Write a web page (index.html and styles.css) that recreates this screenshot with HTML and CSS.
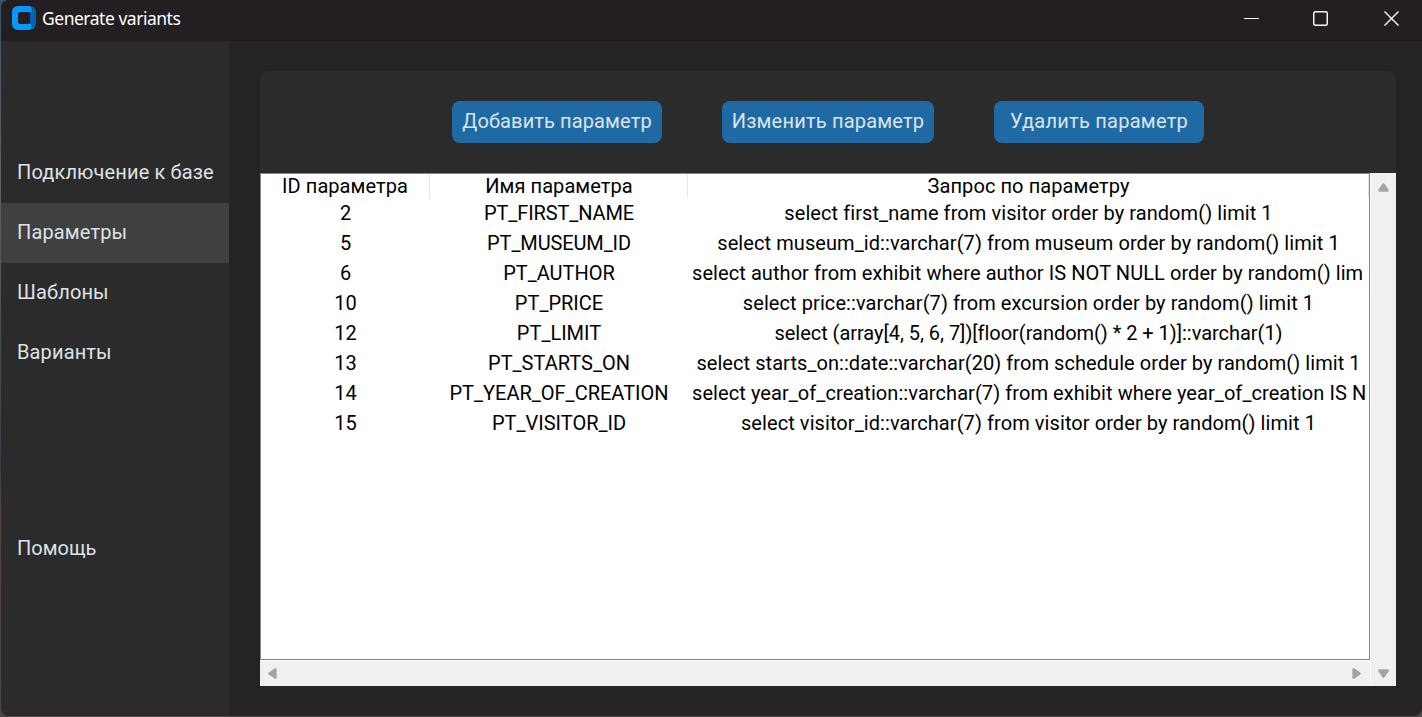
FILE: index.html
```html
<!DOCTYPE html>
<html lang="ru">
<head>
<meta charset="utf-8">
<title>Generate variants</title>
<link rel="stylesheet" href="styles.css">
</head>
<body>
<div class="window">
  <header class="titlebar">
    <svg class="logo" width="24" height="24" viewBox="0 0 24 24"><rect width="24" height="24" rx="6" fill="#0561ad"/><path d="M6 0H16.500a3 3 0 0 1 3 3V6H9a3 3 0 0 0-3 3v6a3 3 0 0 0 3 3H19.500v3a3 3 0 0 1-3 3H6a6 6 0 0 1-6-6V6a6 6 0 0 1 6-6Z" fill="#0a97fb"/><rect x="6" y="6" width="12" height="12" rx="2.500" fill="#231e21"/></svg>
    <h1 class="title">Generate variants</h1>
    <div class="controls">
      <svg width="16" height="16" viewBox="0 0 16 16"><path d="M0 7.5H15" stroke="#fff"/></svg>
      <svg class="max" width="16" height="16" viewBox="0 0 16 16"><rect x=".75" y=".75" width="13.5" height="13.5" rx="1.5" fill="none" stroke="#fff" stroke-width="1.4"/></svg>
      <svg width="16" height="16" viewBox="0 0 16 16"><path d="M.5.5 14.5 14.5M14.5.5.5 14.5" stroke="#fff" stroke-width="1.4"/></svg>
    </div>
  </header>
  <div class="body">
    <nav class="sidebar">
      <a class="item">Подключение к базе</a>
      <a class="item active">Параметры</a>
      <a class="item">Шаблоны</a>
      <a class="item">Варианты</a>
      <a class="item help">Помощь</a>
    </nav>
    <main class="panel">
      <div class="toolbar">
        <button class="btn">Добавить параметр</button>
        <button class="btn wide">Изменить параметр</button>
        <button class="btn loose">Удалить параметр</button>
      </div>
      <div class="viewer">
        <div class="table">
          <div class="row head"><div>ID параметра</div><div>Имя параметра</div><div>Запрос по параметру</div></div>
          <div class="row"><div>2</div><div class="tight">PT_FIRST_NAME</div><div class="first">select first_name from visitor order by random() limit 1</div></div>
          <div class="row"><div>5</div><div class="tight">PT_MUSEUM_ID</div><div>select museum_id::varchar(7) from museum order by random() limit 1</div></div>
          <div class="row"><div>6</div><div>PT_AUTHOR</div><div class="clip">select author from exhibit where author IS NOT NULL order by random() lim</div></div>
          <div class="row"><div>10</div><div>PT_PRICE</div><div>select price::varchar(7) from excursion order by random() limit 1</div></div>
          <div class="row"><div>12</div><div>PT_LIMIT</div><div class="array">select (array[4, 5, 6, 7])[floor(random() * 2 + 1)]::varchar(1)</div></div>
          <div class="row"><div>13</div><div>PT_STARTS_ON</div><div class="date">select starts_on::date::varchar(20) from schedule order by random() limit 1</div></div>
          <div class="row"><div>14</div><div>PT_YEAR_OF_CREATION</div><div class="clip">select year_of_creation::varchar(7) from exhibit where year_of_creation IS N</div></div>
          <div class="row"><div>15</div><div>PT_VISITOR_ID</div><div>select visitor_id::varchar(7) from visitor order by random() limit 1</div></div>
        </div>
        <div class="vbar">
          <svg width="11" height="9" viewBox="0 0 11 9"><path d="M4.5.7Q5.5-.3 6.5.7L10.7 6.8Q11.2 8.7 9.5 8.7H1.5Q-.2 8.7.3 6.8Z" fill="#a3a3a3"/></svg>
          <svg width="11" height="9" viewBox="0 0 11 9"><path d="M4.5 8.3Q5.5 9.3 6.5 8.3L10.7 2.2Q11.2.3 9.5.3H1.5Q-.2.3.3 2.2Z" fill="#a3a3a3"/></svg>
        </div>
        <div class="hbar">
          <svg width="9" height="11" viewBox="0 0 9 11"><path d="M.7 4.5Q-.3 5.5.7 6.5L6.8 10.7Q8.7 11.2 8.7 9.5V1.5Q8.7-.2 6.8.3Z" fill="#a3a3a3"/></svg>
          <svg width="9" height="11" viewBox="0 0 9 11"><path d="M8.3 4.5Q9.3 5.5 8.3 6.5L2.2 10.7Q.3 11.2.3 9.5V1.5Q.3-.2 2.2.3Z" fill="#a3a3a3"/></svg>
        </div>
      </div>
    </main>
  </div>
</div>
</body>
</html>
```
FILE: styles.css
```css
* { box-sizing: border-box; }
body { margin: 0; height: 717px; overflow: hidden; padding: 0 0 1px 1px; background: linear-gradient(#355566, #62605f 25%, #344147 65%, #51453f 70%, #4b4646); font-family: Roboto, "Liberation Sans", sans-serif; font-size: 20px; }
.window { height: 716px; display: flex; flex-direction: column; background: #242424; border-radius: 8px 0 8px 8px; overflow: hidden; }
.titlebar { height: 41px; flex: none; display: flex; align-items: center; padding: 0 22px 4px 11px; background: #231e21; color: #fff; }
.logo { margin-top: -1px; }
.title { margin: -1px 0 0 6px; font: 17.5px/24px "Noto Sans", sans-serif; letter-spacing: -.48px; }
.controls { display: flex; margin-left: auto; gap: 54px; }
.max { margin: 0 1px 0 -1px; }
.body { flex: 1; display: flex; min-height: 0; }
.sidebar { width: 228px; background: #2b2b2b; padding-top: 102px; }
.item { display: flex; align-items: center; height: 60px; padding: 0 0 2px 16px; color: #dfe2e6; white-space: nowrap; letter-spacing: .14px; }
.active { background: #404040; }
.help { margin-top: 136px; letter-spacing: 0; }
.panel { margin: 30px 26px 30px 31px; width: 1136px; height: 615px; background: #2b2b2b; border-radius: 8px 8px 0 0; }
.toolbar { height: 102px; padding-top: 30px; display: flex; justify-content: center; gap: 60px; }
.btn { width: 210px; height: 42px; padding: 0 0 2px; border: 0; border-radius: 8px; background: #1f6aa5; color: #dce4ee; font: inherit; white-space: nowrap; letter-spacing: .12px; }
.wide { width: 212px; letter-spacing: .2px; }
.loose { letter-spacing: .25px; }
.viewer { display: grid; grid-template: 487px 26px / 1110px 26px; height: 513px; background: #fafafa; }
.table { background: #fff; border: 1px solid #828790; overflow: hidden; }
.row { display: grid; grid-template-columns: 169px 258px 681px; height: 30px; line-height: 30px; text-align: center; white-space: nowrap; color: #000; }
.row > div { overflow: hidden; }
.row > div:last-child { letter-spacing: .08px; }
.row > .first { letter-spacing: .11px; }
.row > .array { letter-spacing: -.04px; }
.row > .date { letter-spacing: .06px; }
.tight { letter-spacing: -.12px; }
.head { height: 24px; line-height: 25px; }
.head > div { border-right: 1px solid #e5e5e5; letter-spacing: .06px; }
.head > div + div { padding-left: 1px; }
.row > .clip { padding-left: 4px; text-align: left; letter-spacing: .073px; }
.row > div.clip:last-child { letter-spacing: .073px; }
.vbar { grid-area: 1 / 2 / 3 / 3; margin-left: 1px; background: #f0f0f0; display: flex; flex-direction: column; justify-content: space-between; align-items: center; padding: 10px 0 8px; }
.hbar { margin-top: 1px; background: #f0f0f0; display: flex; justify-content: space-between; align-items: center; padding: 0 9px 0 8px; }
.row > div.array:last-child { letter-spacing: -.03px; }
.row > div.date:last-child { letter-spacing: .06px; }
```
